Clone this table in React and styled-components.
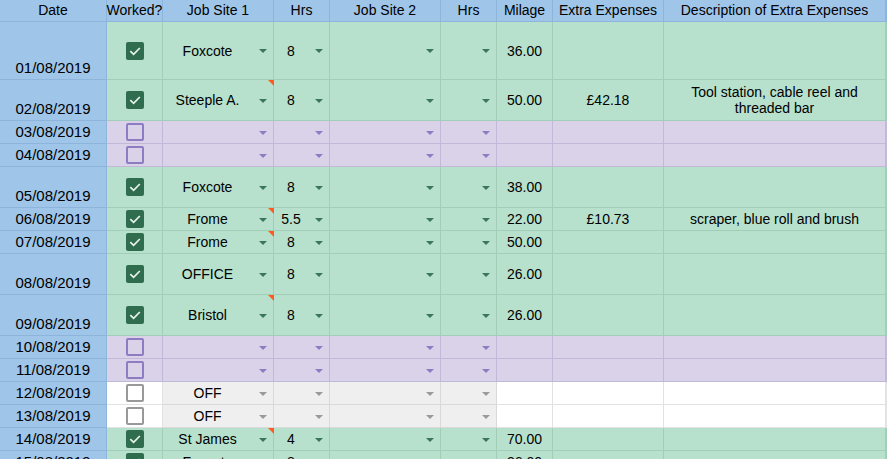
import React from "react";
import styled, { createGlobalStyle } from "styled-components";

const GlobalStyle = createGlobalStyle`
  html, body { margin: 0; padding: 0; background: #fff; }
  body {
    font-family: "Liberation Sans", Arial, sans-serif;
    color: #000;
    overflow: hidden;
  }
`;

const COLS = "107px 56px 111px 56px 111px 56px 56px 111px 222px 1fr";

const tones = {
  head: { bg: "#9fc5e8", line: "#8db5dc" },
  date: { bg: "#9fc5e8", line: "#8db5dc" },
  green: { bg: "#b7e1cd", line: "#a2cdb7", mark: "#2f6d4e", arrow: "#3a7658" },
  purple: { bg: "#d9d2e9", line: "#c2b8d8", mark: "#8e7cc3", arrow: "#8e7cc3" },
  grey: { bg: "#efefef", line: "#d9d9d9", mark: "#999999", arrow: "#9a9a9a" },
  white: { bg: "#ffffff", line: "#e2e2e2", mark: "#999999" },
};

const Sheet = styled.div`
  width: 887px;
  height: 459px;
  overflow: hidden;
`;

const Row = styled.div`
  display: grid;
  grid-template-columns: ${COLS};
  height: ${(p) => p.$h}px;
`;

const Cell = styled.div`
  position: relative;
  display: flex;
  align-items: center;
  justify-content: center;
  box-sizing: border-box;
  background: ${(p) => tones[p.$tone].bg};
  border-right: 1px solid ${(p) => tones[p.$tone].line};
  border-bottom: 1px solid ${(p) => tones[p.$tone].line};
  font-size: 14px;
  text-align: center;
  white-space: nowrap;
  overflow: visible;
`;

const HeadCell = styled(Cell)`
  line-height: 16px;
  padding-bottom: 1px;
`;

const DateCell = styled(Cell)`
  align-items: flex-end;
  font-size: 15px;
  padding-bottom: 2px;
  line-height: 18px;
`;

const Value = styled.span`
  flex: 1;
  text-align: center;
`;

const WrapText = styled.div`
  white-space: normal;
  line-height: 16px;
  padding: 0 8px;
`;

const Arrow = styled.span`
  flex: none;
  width: 0;
  height: 0;
  margin: 1px 6px 0 7px;
  border-left: 4.5px solid transparent;
  border-right: 4.5px solid transparent;
  border-top: 4.5px solid ${(p) => tones[p.$tone].arrow};
`;

const Note = styled.span`
  position: absolute;
  top: 0;
  right: -1px;
  width: 0;
  height: 0;
  border-top: 6px solid #ff5a1f;
  border-left: 6px solid transparent;
`;

const Box = styled.span`
  box-sizing: border-box;
  width: 18px;
  height: 18px;
  border-radius: 2px;
  display: flex;
  align-items: center;
  justify-content: center;
  background: ${(p) => (p.$on ? tones[p.$tone].mark : "transparent")};
  border: ${(p) => (p.$on ? "none" : `2px solid ${tones[p.$tone].mark}`)};
`;

function Check({ on, tone }) {
  return (
    <Box $on={on} $tone={tone}>
      {on && (
        <svg width="18" height="18" viewBox="0 0 18 18">
          <path d="M4.3 9.2 L7.6 12.4 L13.8 6" fill="none" stroke="#e8f3ec" strokeWidth="1.7" />
        </svg>
      )}
    </Box>
  );
}

function Drop({ tone, value, note }) {
  return (
    <Cell $tone={tone}>
      <Value>{value}</Value>
      <Arrow $tone={tone} />
      {note && <Note />}
    </Cell>
  );
}

const rows = [
  { date: "01/08/2019", h: 58, kind: "green", on: true, site: "Foxcote", hrs: "8", miles: "36.00" },
  { date: "02/08/2019", h: 41, kind: "green", on: true, site: "Steeple A.", note: true, hrs: "8", miles: "50.00", extra: "£42.18", desc: "Tool station, cable reel and threaded bar" },
  { date: "03/08/2019", h: 23, kind: "purple" },
  { date: "04/08/2019", h: 23, kind: "purple" },
  { date: "05/08/2019", h: 41, kind: "green", on: true, site: "Foxcote", hrs: "8", miles: "38.00" },
  { date: "06/08/2019", h: 23, kind: "green", on: true, site: "Frome", note: true, hrs: "5.5", miles: "22.00", extra: "£10.73", desc: "scraper, blue roll and brush" },
  { date: "07/08/2019", h: 23, kind: "green", on: true, site: "Frome", note: true, hrs: "8", miles: "50.00" },
  { date: "08/08/2019", h: 41, kind: "green", on: true, site: "OFFICE", hrs: "8", miles: "26.00", plain: true },
  { date: "09/08/2019", h: 41, kind: "green", on: true, site: "Bristol", note: true, hrs: "8", miles: "26.00" },
  { date: "10/08/2019", h: 23, kind: "purple" },
  { date: "11/08/2019", h: 23, kind: "purple" },
  { date: "12/08/2019", h: 23, kind: "off", site: "OFF" },
  { date: "13/08/2019", h: 23, kind: "off", site: "OFF" },
  { date: "14/08/2019", h: 23, kind: "green", on: true, site: "St James", note: true, hrs: "4", miles: "70.00" },
  { date: "15/08/2019", h: 23, kind: "green", on: true, site: "Foxcote", hrs: "8", miles: "36.00" },
];

const headers = ["Date", "Worked?", "Job Site 1", "Hrs", "Job Site 2", "Hrs", "Milage", "Extra Expenses", "Description of Extra Expenses", ""];

function SheetRow({ r }) {
  const off = r.kind === "off";
  const t = off ? "grey" : r.kind;
  const side = off ? "white" : r.kind;
  return (
    <Row $h={r.h}>
      <DateCell $tone="date">{r.date}</DateCell>
      <Cell $tone={side}>
        <Check on={!!r.on} tone={side} />
      </Cell>
      {r.plain ? (
        <Drop tone={t} value={r.site} />
      ) : (
        <Drop tone={t} value={r.site} note={r.note} />
      )}
      <Drop tone={t} value={r.hrs} />
      <Drop tone={t} />
      <Drop tone={t} />
      <Cell $tone={side}>{r.miles}</Cell>
      <Cell $tone={side}>{r.extra}</Cell>
      <Cell $tone={side}>{r.desc && <WrapText>{r.desc}</WrapText>}</Cell>
      <Cell $tone={side} />
    </Row>
  );
}

export default function App() {
  return (
    <>
      <GlobalStyle />
      <Sheet>
        <Row $h={22}>
          {headers.map((h, i) => (
            <HeadCell key={i} $tone="head">{h}</HeadCell>
          ))}
        </Row>
        {rows.map((r) => (
          <SheetRow key={r.date} r={r} />
        ))}
      </Sheet>
    </>
  );
}
